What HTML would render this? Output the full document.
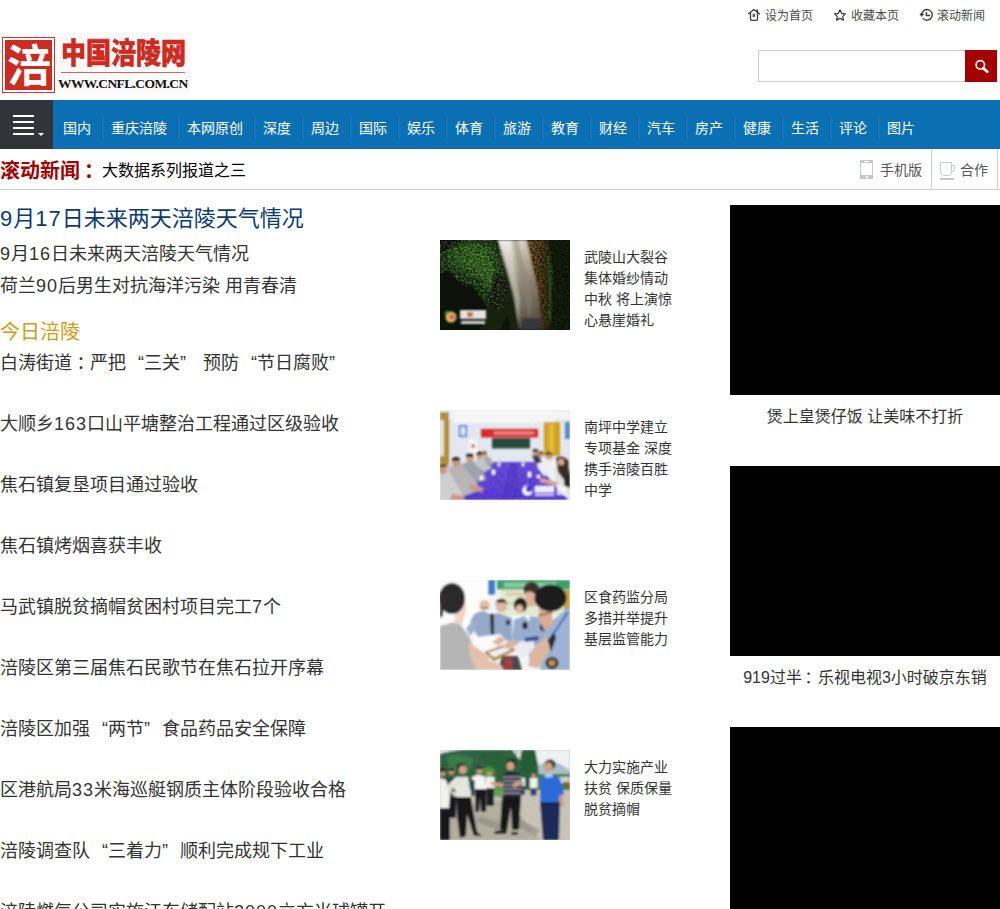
<!DOCTYPE html>
<html lang="zh-CN">
<head>
<meta charset="utf-8">
<title>中国涪陵网</title>
<style>
*{margin:0;padding:0;box-sizing:border-box}
html,body{width:1000px;height:909px;overflow:hidden;background:#fff}
body{position:relative;font-family:"Liberation Sans","Noto Sans CJK SC",sans-serif;color:#333}
a{color:inherit;text-decoration:none}
.abs{position:absolute;white-space:nowrap}

/* logo */
.logo{position:absolute;left:0;top:33px;width:190px;height:60px;background:#fafafa}
.seal{position:absolute;left:2px;top:4px;width:53px;height:56px;border:1px solid #d2342a;padding:2px;background:#fff}
.seal span{display:block;width:100%;height:100%;background:#cc2b22;color:#fff;font-weight:700;font-size:44px;line-height:53px;text-align:center;overflow:hidden;letter-spacing:-2px;text-indent:-1px}
.lname{position:absolute;left:61px;top:5px;font-size:25px;font-weight:900;color:#cf2a21;-webkit-text-stroke:0.5px #cf2a21;line-height:32px;white-space:nowrap;transform-origin:0 50%;transform:scaleY(1.16)}
.lline{position:absolute;left:61px;top:39px;width:124px;height:1px;background:#e0605a}
.lurl{position:absolute;left:58px;top:43px;font-family:"Liberation Serif",serif;font-weight:bold;font-size:13.5px;line-height:16px;color:#111;letter-spacing:-0.6px;white-space:nowrap}
/* top links */
.toplink{position:absolute;top:7px;height:18px;line-height:18px;font-size:12px;color:#484848;white-space:nowrap}
.toplink svg{position:absolute;top:3px}
/* search */
.sbox{position:absolute;left:758px;top:50px;width:208px;height:32px;border:1px solid #ccc;background:#fff}
.sbtn{position:absolute;left:965px;top:50px;width:32px;height:32px;background:#a50000}
/* nav */
.nav{position:absolute;left:0;top:100px;width:1000px;height:49px;background:#0b6fb4}
.menu{position:absolute;left:0;top:0;width:53px;height:49px;background:#323439}
.menu i{position:absolute;left:13px;width:21px;height:2px;background:#fff}
.menu u{position:absolute;left:38px;top:33px;width:0;height:0;border-left:3px solid transparent;border-right:3px solid transparent;border-top:3px solid #fff}
.nav a{position:absolute;top:0;height:49px;line-height:56px;font-size:14px;color:#fff;white-space:nowrap}
.nav b{position:absolute;top:16px;width:2px;height:22px;background:linear-gradient(90deg,#0a5a96 50%,#1c84cd 50%)}
/* ticker */
.tick{position:absolute;left:0;top:149px;width:1000px;height:41px;border-bottom:1px solid #ccc}
.tick .t1{position:absolute;left:0;top:7px;font-size:20px;font-weight:bold;color:#a00000;line-height:30px;white-space:nowrap}
.tick .t2{position:absolute;left:102px;top:7px;font-size:16px;color:#000;line-height:30px;white-space:nowrap}
.tick .r{position:absolute;top:0;height:40px;line-height:43px;font-size:14px;color:#555;white-space:nowrap}
.vsep{position:absolute;top:0;width:1px;height:40px;background:#ccc}
/* left news */
.l{position:absolute;left:0;white-space:nowrap;font-size:18px;line-height:30px;height:30px;color:#333}
.l .q{display:inline-block;width:18px}
.l .ql{text-align:right}
.l .qr{text-align:left}
.d{letter-spacing:1px}
.fc{position:relative;left:4.5px}
/* middle */
.pic{position:absolute;left:440px;width:130px;height:90px;overflow:hidden}
.pic svg{display:block}
.cap{position:absolute;left:584px;width:100px;font-size:14px;line-height:21px;color:#333}
/* right */
.blk{position:absolute;left:730px;width:270px;height:190px;background:#000}
.rc{position:absolute;left:730px;width:270px;text-align:center;font-size:16px;line-height:24px;color:#333;white-space:nowrap}
</style>
</head>
<body>

<!-- logo -->
<div class="logo">
  <div class="seal"><span>涪</span></div>
  <div class="lname">中国涪陵网</div>
  <div class="lline"></div>
  <div class="lurl">WWW.CNFL.COM.CN</div>
</div>

<!-- top links -->
<a class="toplink" style="left:765px">设为首页</a>
<a class="toplink" style="left:851px">收藏本页</a>
<a class="toplink" style="left:937px">滚动新闻</a>

<!-- search -->
<div class="sbox"></div>
<div class="sbtn"></div>

<!-- icons -->
<svg class="abs" style="left:744px;top:4px" width="20" height="20" viewBox="0 0 20 20" fill="none" stroke="#3a3a3a" stroke-width="1.3" stroke-linecap="round" stroke-linejoin="round"><path d="M4.6 9.8L9.9 5.5L15.4 9.8"/><path d="M6.5 9.2V15Q6.5 16.4 8 16.4H12Q13.5 16.4 13.5 15V9.2"/><path d="M13.1 5.4V8.2" stroke-width="1.7" stroke-linecap="butt"/><rect x="9.3" y="10.1" width="1.4" height="2.6" fill="#3a3a3a" stroke-width="0.6"/></svg>
<svg class="abs" style="left:830px;top:4px" width="20" height="20" viewBox="0 0 20 20" fill="none" stroke="#3a3a3a" stroke-width="1.25" stroke-linejoin="round"><path d="M10 5.9L11.7 9.3L15.4 9.8L12.7 12.4L13.4 16.1L10 14.3L6.6 16.1L7.3 12.4L4.6 9.8L8.3 9.3Z"/></svg>
<svg class="abs" style="left:916px;top:4px" width="20" height="20" viewBox="0 0 20 20" fill="none" stroke="#3a3a3a" stroke-width="1.35" stroke-linecap="round" stroke-linejoin="round"><path d="M5.6 10.4A5.35 5.35 0 1 1 7.1 14.6"/><path d="M4.1 9.9L5.4 12.4L7.7 10.2Z" fill="#3a3a3a" stroke-width="0.6"/><path d="M10.4 8.3V11.5H13.6"/></svg>
<svg class="abs" style="left:965px;top:50px" width="32" height="32" viewBox="0 0 32 32" fill="none" stroke="#fff"><circle cx="15.3" cy="14.85" r="4.2" stroke-width="1.6"/><path d="M18.4 18.4L22.3 21.6" stroke-width="2.7" stroke-linecap="round"/></svg>
<svg class="abs" style="left:860px;top:160px" width="13" height="19" viewBox="0 0 13 19"><rect width="13" height="19" fill="#c3c8cd"/><rect x="1" y="3" width="11" height="12" fill="#fff"/><rect x="4" y="1" width="5" height="1" fill="#fff"/><rect x="6" y="16" width="2" height="2" fill="#fff"/></svg>
<svg class="abs" style="left:939px;top:161px" width="18" height="20" viewBox="0 0 18 20" fill="none" stroke="#c2cad3" stroke-width="1"><path d="M1.5 1.5H12.5V10Q12.5 14.5 8.5 14.5H5.5Q1.5 14.5 1.5 10Z"/><path d="M12.5 4.5H15.3V10.3H12.5"/><path d="M1 18H15" stroke="#bcc4cc" stroke-width="1.8"/></svg>


<!-- nav -->
<div class="nav">
  <div class="menu"><i style="top:15px"></i><i style="top:21px"></i><i style="top:27px"></i><i style="top:33px"></i><u></u></div>
  <a style="left:63px">国内</a><b style="left:101px"></b>
  <a style="left:111px">重庆涪陵</a><b style="left:177px"></b>
  <a style="left:187px">本网原创</a><b style="left:253px"></b>
  <a style="left:263px">深度</a><b style="left:301px"></b>
  <a style="left:311px">周边</a><b style="left:349px"></b>
  <a style="left:359px">国际</a><b style="left:397px"></b>
  <a style="left:407px">娱乐</a><b style="left:445px"></b>
  <a style="left:455px">体育</a><b style="left:493px"></b>
  <a style="left:503px">旅游</a><b style="left:541px"></b>
  <a style="left:551px">教育</a><b style="left:589px"></b>
  <a style="left:599px">财经</a><b style="left:637px"></b>
  <a style="left:647px">汽车</a><b style="left:685px"></b>
  <a style="left:695px">房产</a><b style="left:733px"></b>
  <a style="left:743px">健康</a><b style="left:781px"></b>
  <a style="left:791px">生活</a><b style="left:829px"></b>
  <a style="left:839px">评论</a><b style="left:877px"></b>
  <a style="left:887px">图片</a>
</div>

<!-- ticker -->
<div class="tick">
  <span class="t1">滚动新闻<span style="position:relative;left:4px">：</span></span>
  <span class="t2">大数据系列报道之三</span>
  <span class="r" style="left:880px">手机版</span>
  <div class="vsep" style="left:931px"></div>
  <span class="r" style="left:960px">合作</span>
  <div class="vsep" style="left:997px"></div>
</div>

<!-- left column -->
<a class="l" style="top:203px;font-size:22px;line-height:32px;height:32px;color:#0b3a6e"><span class="d">9</span>月<span class="d">17</span>日未来两天涪陵天气情况</a>
<a class="l" style="top:239px"><span class="d">9</span>月<span class="d">16</span>日未来两天涪陵天气情况</a>
<a class="l" style="top:271px">荷兰<span class="d">90</span>后男生对抗海洋污染 用青春清</a>
<a class="l" style="top:317px;font-size:20px;color:#cf9d12">今日涪陵</a>
<a class="l" style="top:348px">白涛街道<span class="fc">：</span>严把<span class="q ql">“</span>三关<span class="q qr">”</span> 预防<span class="q ql">“</span>节日腐败<span class="q qr">”</span></a>
<a class="l" style="top:409px">大顺乡<span class="d">163</span>口山平塘整治工程通过区级验收</a>
<a class="l" style="top:470px">焦石镇复垦项目通过验收</a>
<a class="l" style="top:531px">焦石镇烤烟喜获丰收</a>
<a class="l" style="top:592px">马武镇脱贫摘帽贫困村项目完工<span class="d">7</span>个</a>
<a class="l" style="top:653px">涪陵区第三届焦石民歌节在焦石拉开序幕</a>
<a class="l" style="top:714px">涪陵区加强<span class="q ql">“</span>两节<span class="q qr">”</span>食品药品安全保障</a>
<a class="l" style="top:775px">区港航局<span class="d">33</span>米海巡艇钢质主体阶段验收合格</a>
<a class="l" style="top:836px">涪陵调查队<span class="q ql">“</span>三着力<span class="q qr">”</span>顺利完成规下工业</a>
<a class="l" style="top:897px">涪陵燃气公司实施江东储配站<span class="d">2000</span>立方米球罐开</a>

<!-- middle column -->
<div class="pic" style="top:240px"><svg width="130" height="90" viewBox="0 0 130 90"><defs><filter id="b1" x="-5%" y="-5%" width="110%" height="110%"><feGaussianBlur stdDeviation="1"/></filter><filter id="n1" x="0" y="0" width="100%" height="100%"><feTurbulence type="fractalNoise" baseFrequency="0.42" numOctaves="3" seed="7" result="t"/><feColorMatrix in="t" type="matrix" values="0 0 0 0 0  0 0 0 0 0  0 0 0 0 0  2.6 0 0 0 -0.85"/></filter><filter id="n2" x="0" y="0" width="100%" height="100%"><feTurbulence type="fractalNoise" baseFrequency="0.5" numOctaves="2" seed="3" result="t"/><feColorMatrix in="t" type="matrix" values="0 0 0 0 0.5  0 0 0 0 0.72  0 0 0 0 0.3  0 2.8 0 0 -1.3"/></filter><clipPath id="c1"><path d="M0 0H58L64 28L67 52L62 70L44 64L34 48L20 44L8 32L0 34Z"/></clipPath><clipPath id="c2"><path d="M88 0H130V90H102L99 52L92 20Z"/></clipPath><linearGradient id="ray" x1="0" y1="0" x2="0.25" y2="1"><stop offset="0" stop-color="#f4f1ea"/><stop offset="0.3" stop-color="#beb6a6"/><stop offset="0.6" stop-color="#8c8474"/><stop offset="1" stop-color="#5c5648"/></linearGradient><linearGradient id="rock" x1="0" y1="0" x2="1" y2="0"><stop offset="0" stop-color="#86652f"/><stop offset="0.55" stop-color="#5a431f"/><stop offset="1" stop-color="#26260f"/></linearGradient></defs><rect width="130" height="90" fill="#0c1209"/><g filter="url(#b1)"><path d="M0 0H58L64 28L67 52L60 68L44 62L34 46L20 42L8 30L0 32Z" fill="#1f3d16"/><path d="M6 8L30 2L52 6L60 30L62 50L52 56L40 40L26 34L10 24Z" fill="#2e5c1c"/><path d="M22 8L44 8L54 30L50 44L34 30L20 20Z" fill="#3f7a24" opacity="0.7"/><path d="M0 0H22L8 10L0 14Z" fill="#0c1209"/><path d="M56 30L66 40L70 70L60 90H40L48 60Z" fill="#13200f"/><path d="M58 0H87L91 20L98 50L100 78L84 90H78L73 56L65 26Z" fill="url(#ray)"/><path d="M62 0L70 0L80 60L78 90L75 60Z" fill="#fff" opacity="0.3"/><path d="M72 0L78 0L92 60L90 80Z" fill="#8a8272" opacity="0.45"/><path d="M64 40L72 50L80 90H70L66 60Z" fill="#1a2412" opacity="0.8"/><path d="M86 0H109L113 30L112 62L110 90H101L98 52L91 20Z" fill="url(#rock)"/><path d="M109 0H130V90H110L113 50Z" fill="#162010"/><path d="M107 4L112 30L111 80L108 84L109 40Z" fill="#35702a" opacity="0.7"/><path d="M82 78H100V90H80Z" fill="#35383a"/></g><rect width="68" height="72" fill="#0a1207" filter="url(#n1)" clip-path="url(#c1)" opacity="0.6"/><rect width="68" height="72" filter="url(#n2)" clip-path="url(#c1)" opacity="0.4"/><g clip-path="url(#c2)"><rect x="86" width="44" height="90" fill="#0a1207" filter="url(#n1)" opacity="0.6"/></g><g filter="url(#b1)" opacity="0.95"><circle cx="11" cy="77" r="5.500" fill="#e3cf4a"/><circle cx="12" cy="77" r="2.600" fill="#e0409a"/><circle cx="7" cy="73" r="2" fill="#58b04a"/><rect x="20" y="70" width="26" height="9" fill="#f4f0ec"/><rect x="27" y="72" width="6" height="5" fill="#d86a3a"/><rect x="21" y="81" width="24" height="3" fill="#e8e8e8"/></g></svg></div>
<div class="cap" style="top:247px">武陵山大裂谷<br>集体婚纱情动<br>中秋 将上演惊<br>心悬崖婚礼</div>
<div class="pic" style="top:410px"><svg width="130" height="90" viewBox="0 0 130 90"><defs><filter id="b2" x="-5%" y="-5%" width="110%" height="110%"><feGaussianBlur stdDeviation="0.8"/></filter><filter id="n6" x="0" y="0" width="100%" height="100%"><feTurbulence type="fractalNoise" baseFrequency="0.7" numOctaves="1" seed="2" result="t"/><feColorMatrix in="t" type="matrix" values="0 0 0 0 0.62  0 0 0 0 0.5  0 0 0 0 0.95  0 2.4 0 0 -1"/></filter><clipPath id="c6"><path d="M50 52H95L128 90H4Z"/></clipPath><linearGradient id="tbl" x1="0" y1="0" x2="0" y2="1"><stop offset="0" stop-color="#5a3ccf"/><stop offset="1" stop-color="#4426c9"/></linearGradient></defs><rect width="130" height="90" fill="#e3e8f0"/><g filter="url(#b2)"><rect x="0" y="0" width="130" height="9" fill="#f3f4f6"/><rect x="14" y="0" width="100" height="13" fill="#f6f6f6"/><rect x="0" y="2" width="9" height="54" fill="#b38c3a"/><rect x="0" y="10" width="4" height="36" fill="#e9e2cf"/><rect x="19" y="15" width="8" height="12" fill="#3f6fd2"/><rect x="20.5" y="16.5" width="5" height="9" fill="#dfe8f6"/><rect x="29" y="29" width="8" height="21" fill="#f8f8f8"/><circle cx="33" cy="36" r="2" fill="#d85040"/><rect x="41" y="19" width="57" height="8.5" fill="#d9292d"/><rect x="54" y="21.5" width="40" height="3" fill="#f0a8a0" opacity="0.8"/><rect x="52" y="28" width="38" height="10.5" fill="#2c4a3c"/><rect x="104" y="12" width="16" height="34" fill="#cfa023"/><rect x="109" y="14" width="5" height="30" fill="#e2bb3d"/><rect x="125" y="12" width="5" height="17" fill="#5a8ad0"/><path d="M50 52H95L128 90H4Z" fill="url(#tbl)"/><path d="M70 52H76L82 90H62Z" fill="#3a1fb4" opacity="0.5"/><rect y="50" width="130" height="40" filter="url(#n6)" clip-path="url(#c6)" opacity="0.5"/><!-- left people --><path d="M0 60L8 56L20 68L24 90H0Z" fill="#cfcfd2"/><path d="M8 58L20 52L34 66L40 80L24 86L14 70Z" fill="#b9b4b8"/><path d="M22 54L32 50L44 62L46 70L36 72Z" fill="#9ea2aa"/><path d="M34 50L42 48L52 58L44 62Z" fill="#c2c4c8"/><path d="M43 47L48 46L54 53L48 56Z" fill="#a8a8a8"/><circle cx="3" cy="60" r="4.2" fill="#c99a80"/><path d="M-1 57A4.5 4.5 0 0 1 7 57Z" fill="#2a2420"/><circle cx="16" cy="52.500" r="4.300" fill="#c99a80"/><path d="M11.500 51A4.600 4.600 0 0 1 20.500 50.500Z" fill="#2a2420"/><circle cx="30" cy="48.500" r="3.800" fill="#c99a80"/><path d="M26 47A4 4 0 0 1 34 47Z" fill="#2a2420"/><circle cx="39.500" cy="46" r="3.300" fill="#c99a80"/><path d="M36 45A3.500 3.500 0 0 1 43 45Z" fill="#2a2420"/><circle cx="44.500" cy="44" r="2.600" fill="#c99a80"/><path d="M42 43.500A2.600 2.600 0 0 1 47 43.500Z" fill="#2a2420"/><!-- right people --><path d="M96 50L104 46L112 52L116 62L104 66L98 58Z" fill="#eceef2"/><path d="M106 52L118 50L126 60L128 74L114 76L108 64Z" fill="#f1f1f4"/><path d="M92 46L98 44L102 52L96 54Z" fill="#3a3a44"/><path d="M114 58L124 52L130 56V84L118 80Z" fill="#e4e0e0"/><path d="M116 48Q122 44 128 50L130 66L124 70L118 62Z" fill="#3b2a22"/><path d="M124 66L130 64V78L124 76Z" fill="#2a2a2e"/><circle cx="95.500" cy="43" r="2.800" fill="#c99a80"/><path d="M92.500 42A3 3 0 0 1 98.500 42Z" fill="#2a2420"/><circle cx="101" cy="44.500" r="3" fill="#c99a80"/><path d="M98 43.500A3.200 3.200 0 0 1 104 43.500Z" fill="#2a2420"/><circle cx="109" cy="46" r="3.500" fill="#c99a80"/><path d="M105.500 44.500A3.600 3.600 0 0 1 112.500 44.500Z" fill="#2a2420"/><circle cx="121" cy="52" r="3.200" fill="#d8a890"/><path d="M100 68L118 72L116 76L100 72Z" fill="#d8a890"/><path d="M30 74L44 78L42 82L30 80Z" fill="#c99a80"/><path d="M12 84L24 86L24 90H10Z" fill="#c99a80"/><!-- cups --><rect x="40" y="66" width="3" height="4" fill="#fff"/><rect x="52" y="60" width="3" height="4.500" fill="#fff"/><rect x="58" y="53" width="2" height="3" fill="#fff"/><rect x="88" y="62" width="3" height="5" fill="#fff"/><rect x="97" y="65" width="3" height="3" fill="#fff"/><rect x="82" y="53" width="2" height="3" fill="#fff"/><!-- watermark --><circle cx="87.500" cy="80.500" r="5" fill="#fff"/><circle cx="89" cy="79" r="3.200" fill="#4a2dcc"/><rect x="95" y="76" width="19" height="6.500" fill="#fff" opacity="0.92"/><rect x="95" y="84" width="19" height="1.600" fill="#fff" opacity="0.9"/><rect x="117" y="76" width="9" height="9" fill="#fff" opacity="0.75"/></g></svg></div>
<div class="cap" style="top:417px">南坪中学建立<br>专项基金 深度<br>携手涪陵百胜<br>中学</div>
<div class="pic" style="top:580px"><svg width="130" height="90" viewBox="0 0 130 90"><defs><filter id="b3" x="-5%" y="-5%" width="110%" height="110%"><feGaussianBlur stdDeviation="0.9"/></filter></defs><rect width="130" height="90" fill="#f4f5f6"/><g filter="url(#b3)"><rect x="0" y="0" width="48" height="50" fill="#fdfdfd"/><rect x="60" y="9" width="70" height="26" fill="#e4ead2"/><rect x="66" y="12" width="60" height="4" fill="#d8c890" opacity="0.7"/><rect x="66" y="22" width="64" height="3" fill="#c8d8a0" opacity="0.7"/><rect x="57" y="0" width="73" height="9.500" fill="#3aa266"/><rect x="64" y="2.500" width="52" height="5" fill="#9fd6b4" opacity="0.8"/><rect x="48" y="0" width="7" height="14.500" fill="#3d7cc8"/><rect x="124" y="10" width="6" height="22" fill="#c8a040"/><!-- officer 1 bald --><path d="M30 42Q34 30 44 31L54 36L56 58L40 60L34 50Z" fill="#97a9c9"/><circle cx="44.500" cy="25" r="5.200" fill="#e2bfa8"/><path d="M40 28H49" stroke="#3a3a3a" stroke-width="0.9"/><path d="M26 48L34 40L38 46L30 56Z" fill="#9dafce"/><!-- officer 2 --><path d="M48 36L58 33L72 38L72 62L60 66L50 58Z" fill="#93a7ca"/><circle cx="61.500" cy="26.500" r="5.600" fill="#ddb69c"/><path d="M55.500 25.500A6 6.200 0 0 1 67.500 24.500L66 22.500L57 22.500Z" fill="#26221f"/><path d="M50 34H54V56H51Z" fill="#2a2a30"/><rect x="66" y="40" width="4" height="5" fill="#2a2a4a"/><!-- officer 3 woman --><path d="M74 40L84 36L90 42L90 60L80 64L72 60Z" fill="#9aadce"/><ellipse cx="80.500" cy="25" rx="6.800" ry="7.500" fill="#25211f"/><ellipse cx="79.500" cy="29" rx="3.800" ry="4.600" fill="#e0b9a2"/><ellipse cx="85" cy="45.500" rx="2.600" ry="3.800" fill="#24242c"/><!-- officer 4 tall --><path d="M90 36L104 38L108 60L104 86L90 84L88 60Z" fill="#98acce"/><ellipse cx="91.500" cy="9.500" rx="8" ry="7.500" fill="#3a322c"/><path d="M86 12Q92 10 97 16L96 26L88 27Q85 20 86 12Z" fill="#dcb49a"/><ellipse cx="103" cy="47" rx="3.200" ry="4" fill="#23232b"/><!-- papers / table --><path d="M30 58L60 54L72 66L46 76Z" fill="#fbfbfb"/><path d="M44 72L66 64L76 70L54 81Z" fill="#ad8436"/><path d="M48 72.500L66 66.500L71 70L54 77.500Z" fill="#f0f0f4"/><path d="M72 64L92 58L96 70L80 78Z" fill="#e9edf2"/><path d="M84 58L98 56L99 60L85 62Z" fill="#2f4f9a"/><path d="M62 76L78 76L82 90H58Z" fill="#4a4a50"/><rect x="64" y="78" width="8" height="12" fill="#c83a3a" opacity="0.7"/><path d="M52 62L60 56L66 60L58 66Z" fill="#e0b9a2"/><path d="M62 66L70 60L80 62L70 70Z" fill="#deb69e"/><!-- woman left --><path d="M0 46L18 41L30 58L40 90H0Z" fill="#b5b5b5"/><path d="M17 20Q27 18 26 32L22 44L14 44Z" fill="#f0d4c6"/><ellipse cx="12" cy="18.500" rx="13" ry="15.500" fill="#2b292b"/><path d="M0 14L4 18L3 36L0 38Z" fill="#3a2a28"/><path d="M30 74L60 84L64 90H36Z" fill="#e6c2ae"/><path d="M28 62L40 70L50 78L44 82L30 74Z" fill="#e4bfa9"/><!-- officer 5 foreground --><path d="M106 46L130 26V90H100L104 60Z" fill="#9db2d4"/><path d="M92 70L106 56L110 70L98 88L88 86Z" fill="#deb69e"/><path d="M99 22Q108 20 112 30L113 46L104 50L99 40Z" fill="#d9ae92"/><ellipse cx="110.500" cy="18" rx="16" ry="13.500" fill="#1f1d1e"/><path d="M98 36L112 32" stroke="#222" stroke-width="1"/><path d="M128 32L108 62" stroke="#2f62c8" stroke-width="1.800"/><ellipse cx="112" cy="83" rx="6.500" ry="6" fill="#24221e"/><ellipse cx="112" cy="83" rx="3.600" ry="3.200" fill="#b89a3a"/><path d="M108 60L114 52L116 58L111 72Z" fill="#2a2a32"/></g></svg></div>
<div class="cap" style="top:587px">区食药监分局<br>多措并举提升<br>基层监管能力</div>
<div class="pic" style="top:750px"><svg width="130" height="90" viewBox="0 0 130 90"><defs><filter id="b4" x="-5%" y="-5%" width="110%" height="110%"><feGaussianBlur stdDeviation="0.8"/></filter><filter id="n4" x="0" y="0" width="100%" height="100%"><feTurbulence type="fractalNoise" baseFrequency="0.55" numOctaves="2" seed="11" result="t"/><feColorMatrix in="t" type="matrix" values="0 0 0 0 0.05  0 0 0 0 0.15  0 0 0 0 0.06  2.4 0 0 0 -0.9"/></filter><filter id="n5" x="0" y="0" width="100%" height="100%"><feTurbulence type="fractalNoise" baseFrequency="0.8" numOctaves="2" seed="5" result="t"/><feColorMatrix in="t" type="matrix" values="0 0 0 0 0.35  0 0 0 0 0.34  0 0 0 0 0.3  0 2.2 0 0 -0.85"/></filter><clipPath id="c4"><path d="M0 4Q10 0 30 0H95L98 14L99 24H130V40H0Z"/></clipPath></defs><rect width="130" height="90" fill="#cdc9bc"/><g filter="url(#b4)"><rect x="0" y="0" width="130" height="22" fill="#ecf3f1"/><path d="M96 16Q112 8 120 14L130 20V30H96Z" fill="#a9c1c6"/><path d="M0 4Q10 0 30 0H72L80 10L82 40H0Z" fill="#2a6040"/><path d="M6 6Q20 2 34 8L30 20L10 22Z" fill="#3f8450" opacity="0.8"/><path d="M40 4L60 2L74 12L70 26L50 20Z" fill="#275f36"/><ellipse cx="49" cy="22" rx="6" ry="5.500" fill="#4f9c3c"/><path d="M82 0H95L98 14L99 40H81L79 16Z" fill="#1f5a30"/><path d="M97 24H130V40H97Z" fill="#3f7d4c"/><rect x="118" y="27" width="12" height="6" fill="#e8e8e4"/><rect x="124" y="32" width="6" height="4" fill="#b84a3a"/><path d="M50 34L66 34L64 48L50 46Z" fill="#5f9f4c"/><path d="M0 40H130V90H0Z" fill="#cdc9bc"/><path d="M50 34L66 34L64 48L50 46Z" fill="#5f9f4c"/><path d="M0 60L60 50L76 60L100 90H0Z" fill="#a9a696" opacity="0.7"/><path d="M40 66L62 74L58 80L36 72Z" fill="#8b8a7c" opacity="0.7"/><path d="M74 66L100 80L96 86L72 74Z" fill="#8b8a7c" opacity="0.6"/><rect width="130" height="40" filter="url(#n4)" clip-path="url(#c4)" opacity="0.6"/><rect y="40" width="130" height="50" filter="url(#n5)" opacity="0.45"/><!-- man F back --><rect x="90" y="28" width="7.500" height="10" fill="#f1f1ee"/><rect x="90.500" y="38" width="6" height="7.500" fill="#2e3f70"/><circle cx="93.500" cy="25.500" r="2" fill="#c79a80"/><rect x="81" y="28" width="4" height="8" fill="#e8e8e8"/><rect x="81" y="36" width="4" height="9" fill="#34466f"/><!-- man D --><rect x="46" y="27" width="8.500" height="11.500" fill="#f3f3f0"/><rect x="46.500" y="38" width="7.500" height="18" fill="#1e1e24"/><circle cx="49.500" cy="24" r="2.400" fill="#c79a80"/><!-- man C --><path d="M32 27L38 24.500L45 26.500L46.500 39H33Z" fill="#f6f6f4"/><path d="M35 39H46.500L46 62H41L40 46L39 62H35.500Z" fill="#16161a"/><circle cx="39.500" cy="20.500" r="3.300" fill="#c99a7e"/><path d="M36 19.500A3.600 3.600 0 0 1 43 19Z" fill="#25211f"/><rect x="31" y="30" width="3.500" height="16" fill="#2a3350"/><!-- man A2 behind --><rect x="7" y="28" width="8" height="10" fill="#30343a"/><circle cx="11.500" cy="22" r="2.800" fill="#c0917a"/><path d="M8.500 21A3 3 0 0 1 14.500 21Z" fill="#222"/><rect x="9" y="38" width="7" height="30" fill="#15151a"/><!-- man A far left --><path d="M0 28L6 30L10 44L9 58H0Z" fill="#f2f2ef"/><rect x="0" y="58" width="10" height="32" fill="#15151a"/><circle cx="2.500" cy="23" r="3.200" fill="#c0917a"/><path d="M-1 21.500A3.500 3.500 0 0 1 6 21.500Z" fill="#222"/><!-- man B --><path d="M9 34L16 27L28 27L31 47H16L15 40Z" fill="#e6e6e0"/><path d="M5 37L12 31L15 36L11 40L17 44L15 47Z" fill="#e1e1da"/><path d="M16 47H31L33 60L37 82L42 86H34L27 64L26 86L20 88L17 66Z" fill="#141418"/><ellipse cx="21.500" cy="17.500" rx="4.800" ry="4.600" fill="#25211f"/><ellipse cx="22.800" cy="19.800" rx="3.900" ry="4.200" fill="#cf9f84"/><!-- man E striped --><path d="M63 24L70 21L80 23L83 36L81 47H63Z" fill="#2c2c38"/><path d="M63 27H82M63 31H83M63 35H83M63 39H82M63 43H81" stroke="#d8d8e0" stroke-width="1.100"/><path d="M50 32L63 33L63 37L51 35Z" fill="#cf9f84"/><path d="M72 34L80 30L82 34L74 38Z" fill="#cf9f84"/><path d="M62 47H81L79 80H72L71 56L67 80H60Z" fill="#131318"/><path d="M55 81L67 80L66 84H54Z" fill="#111"/><path d="M72 82H78V85H71Z" fill="#111"/><ellipse cx="71.500" cy="13.500" rx="5" ry="4.800" fill="#25211f"/><ellipse cx="70.500" cy="16" rx="4" ry="4.300" fill="#cf9f84"/><!-- man G blue --><path d="M100 28L108 25L120 28L124 44L121 46L120 54H100Z" fill="#2b6bd8"/><path d="M104 24L112 23L113 27L106 28Z" fill="#b8c8e0"/><path d="M119 46L123 44L124 56L120 57Z" fill="#cf9f84"/><path d="M100 53H120L119 90H103Z" fill="#1c2b58"/><rect x="100" y="52.500" width="20" height="1.800" fill="#15151a"/><ellipse cx="110" cy="14.500" rx="5.600" ry="5.200" fill="#34302c"/><ellipse cx="108.300" cy="17.300" rx="4.500" ry="5" fill="#cfa084"/></g></svg></div>
<div class="cap" style="top:757px">大力实施产业<br>扶贫 保质保量<br>脱贫摘帽</div>

<!-- right column -->
<div class="blk" style="top:205px"></div>
<div class="rc" style="top:405px">煲上皇煲仔饭 让美味不打折</div>
<div class="blk" style="top:466px"></div>
<div class="rc" style="top:666px">919过半<span class="fc" style="left:2.5px">：</span>乐视电视3小时破京东销</div>
<div class="blk" style="top:727px"></div>

</body>
</html>
